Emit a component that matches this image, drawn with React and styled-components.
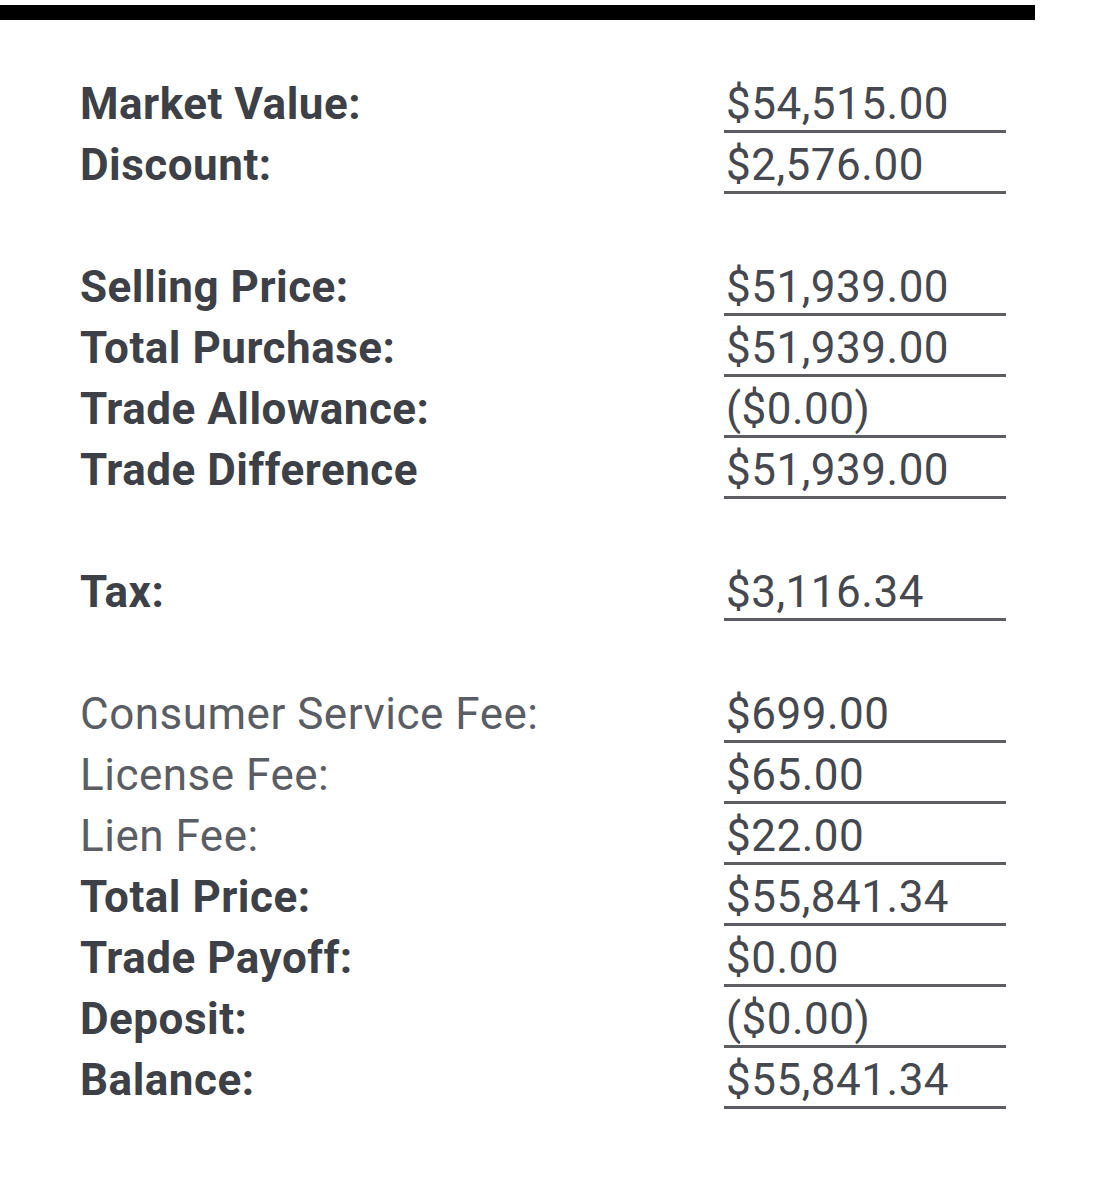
import React from 'react'
import styled, { createGlobalStyle } from 'styled-components'

const GlobalStyle = createGlobalStyle`
  body {
    margin: 0;
    background: #ffffff;
    font-family: Roboto, "Liberation Sans", Arial, sans-serif;
  }
`

const rows = [
  { label: 'Market Value:', value: '$54,515.00' },
  { label: 'Discount:', value: '$2,576.00' },
  null,
  { label: 'Selling Price:', value: '$51,939.00' },
  { label: 'Total Purchase:', value: '$51,939.00' },
  { label: 'Trade Allowance:', value: '($0.00)' },
  { label: 'Trade Difference', value: '$51,939.00' },
  null,
  { label: 'Tax:', value: '$3,116.34' },
  null,
  { label: 'Consumer Service Fee:', value: '$699.00', light: true },
  { label: 'License Fee:', value: '$65.00', light: true },
  { label: 'Lien Fee:', value: '$22.00', light: true },
  { label: 'Total Price:', value: '$55,841.34' },
  { label: 'Trade Payoff:', value: '$0.00' },
  { label: 'Deposit:', value: '($0.00)' },
  { label: 'Balance:', value: '$55,841.34' },
]

const App = () => {
  return (
    <Page>
      <GlobalStyle />
      <TopRule />
      <Summary>
        {rows.map((row, i) =>
          row ? (
            <React.Fragment key={i}>
              <Label light={row.light}>{row.label}</Label>
              <Value>{row.value}</Value>
            </React.Fragment>
          ) : (
            <Spacer key={i} />
          )
        )}
      </Summary>
    </Page>
  )
}

const Page = styled.div`
  width: 1109px;
  min-height: 1187px;
  padding-top: 5px;
  box-sizing: border-box;
`

const TopRule = styled.div`
  width: 1035px;
  height: 15px;
  background: #000;
`

const Summary = styled.div`
  margin-top: 52px;
  padding-left: 80px;
  display: grid;
  grid-template-columns: 644px 282px;
  grid-auto-rows: 61px;
  font-size: 44px;
  letter-spacing: 0.5px;
`

const Label = styled.div`
  padding-top: 6px;
  line-height: 52px;
  font-weight: ${p => (p.light ? 400 : 700)};
  color: ${p => (p.light ? '#5a5d63' : '#3d4046')};
  white-space: nowrap;
`

const Value = styled.div`
  padding-top: 6px;
  line-height: 52px;
  padding-left: 2px;
  color: #45484e;
  border-bottom: 3px solid #5c5d60;
  white-space: nowrap;
`

const Spacer = styled.div`
  grid-column: 1 / -1;
`

export default App
